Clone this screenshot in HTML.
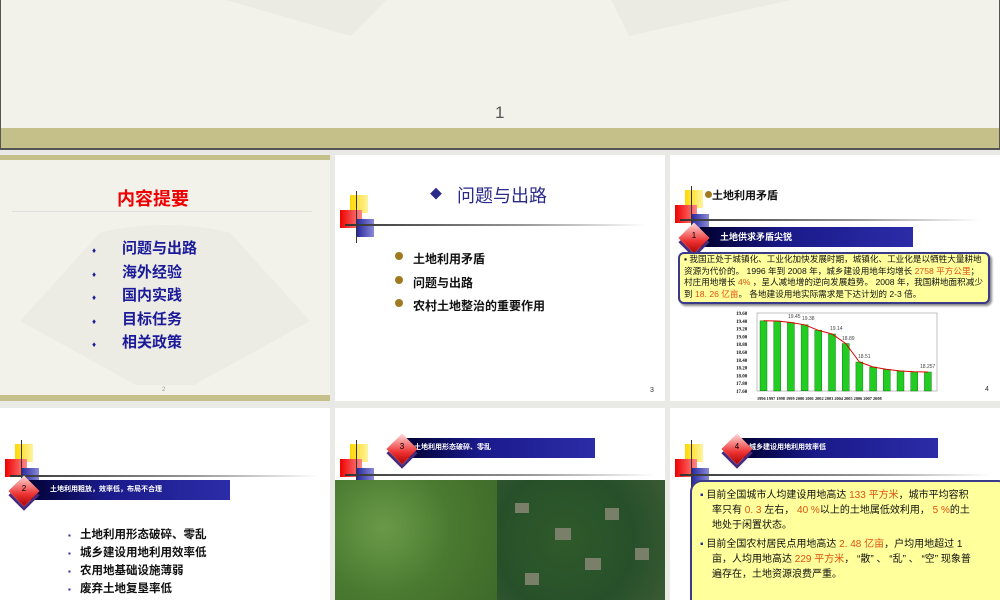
<!DOCTYPE html>
<html><head><meta charset="utf-8"><style>
*{margin:0;padding:0;box-sizing:border-box}
body{width:1000px;height:600px;overflow:hidden;background:#e9e9e6;position:relative;font-family:"Liberation Sans","Noto Sans CJK SC",sans-serif}
.a{position:absolute}
.s{position:absolute;background:#fff;overflow:hidden}
.cn{font-family:"Liberation Sans","Noto Sans CJK SC",sans-serif;font-weight:bold}
.logo{position:absolute;width:40px;height:50px}
.logo .y{position:absolute;left:10px;top:0;width:18px;height:18px;background:linear-gradient(90deg,#ffd800,#fff3a0)}
.logo .r{position:absolute;left:0;top:15px;width:22px;height:18px;background:linear-gradient(90deg,#e00,#f88)}
.logo .b{position:absolute;left:16px;top:24px;width:18px;height:18px;background:linear-gradient(90deg,#24249a,#8a8ad8)}
.logo .v{position:absolute;left:16px;top:-4px;width:1px;height:52px;background:#333}
.hl{position:absolute;height:2px;background:linear-gradient(90deg,#333,#999 60%,#fff)}
.ban{position:absolute;height:20px;background:linear-gradient(90deg,#000030,#1a1a8a 40%,#2c2ca8);color:#fff;font-size:9px;font-weight:bold;line-height:20px;padding-left:20px}
.dia{position:absolute;width:22px;height:22px;transform:rotate(45deg);background:linear-gradient(135deg,#fdd,#e33 60%,#a00);box-shadow:3px 3px 0 #4a2a7a}
.dn{position:absolute;font-size:8px;color:#000;width:20px;text-align:center}
</style></head><body>

<!-- slide 1 -->
<div class="s" style="left:0;top:0;width:1000px;height:150px;background:#f3f2ea;border:1px solid #555;border-top:none">
 <div class="a" style="left:225px;top:0;width:160px;height:36px;background:#ebeae3;clip-path:polygon(0 0,100% 0,78% 100%)"></div>
 <div class="a" style="left:610px;top:0;width:180px;height:36px;background:#ebeae3;clip-path:polygon(0 0,100% 0,10% 100%)"></div>
 <div class="a" style="left:494px;top:103px;font-size:17px;color:#555">1</div>
 <div class="a" style="left:0;top:128px;width:1000px;height:21px;background:#c5bf8a;border-bottom:1px solid #555"></div>
</div>

<!-- slide 2 -->
<div class="s" style="left:0;top:155px;width:330px;height:246px;background:#f2f1ea">
 <div class="a" style="left:0;top:0;width:330px;height:5px;background:#c5bf8a"></div>
 <div class="a" style="left:20px;top:70px;width:290px;height:160px;background:#edece4;border-radius:50% 50% 0 0/45% 45% 0 0;clip-path:polygon(0 60%,30% 0,70% 0,100% 60%,60% 100%,40% 100%)"></div>
 <div class="a" style="left:12px;top:56px;width:300px;height:1px;background:#ddd"></div>
 <div class="a cn" style="left:117px;top:30px;font-size:18px;color:#e00">内容提要</div>
 <div class="a cn" style="left:122px;top:82px;font-size:15px;line-height:23.5px;color:#1a1a9a">问题与出路<br>海外经验<br>国内实践<br>目标任务<br>相关政策</div>
 <div class="a" style="left:92px;top:84px;font-size:8px;line-height:23.5px;color:#1a1a9a">♦<br>♦<br>♦<br>♦<br>♦</div>
 <div class="a" style="left:162px;top:232px;font-size:6px;color:#999">2</div>
 <div class="a" style="left:0;top:240px;width:330px;height:6px;background:#c5bf8a"></div>
</div>

<!-- slide 3 -->
<div class="s" style="left:335px;top:155px;width:330px;height:246px">
 <div class="logo" style="left:5px;top:40px"><div class="y"></div><div class="r"></div><div class="b"></div><div class="v"></div></div>
 <div class="hl" style="left:10px;top:69px;width:300px"></div>
 <div class="a" style="left:95px;top:30px;font-size:12px;color:#2a2a8a">◆</div>
 <div class="a cn" style="left:122px;top:27px;font-size:18px;color:#2a2a8a;font-weight:normal">问题与出路</div>
 <div class="a cn" style="left:78px;top:93px;font-size:12px;line-height:23.5px;color:#111">土地利用矛盾<br>问题与出路<br>农村土地整治的重要作用</div>
 <div class="a" style="left:60px;top:97px;width:8px;height:8px;border-radius:50%;background:#a07a20"></div>
 <div class="a" style="left:60px;top:121px;width:8px;height:8px;border-radius:50%;background:#a07a20"></div>
 <div class="a" style="left:60px;top:144px;width:8px;height:8px;border-radius:50%;background:#a07a20"></div>
 <div class="a" style="left:315px;top:232px;font-size:7px;color:#333">3</div>
</div>

<!-- slide 4 -->
<div class="s" style="left:670px;top:155px;width:330px;height:246px">
 <div class="logo" style="left:5px;top:35px"><div class="y"></div><div class="r"></div><div class="b"></div><div class="v"></div></div>
 <div class="hl" style="left:10px;top:64px;width:300px"></div>
 <div class="a" style="left:35px;top:36px;width:7px;height:7px;border-radius:50%;background:#a07a20"></div>
 <div class="a cn" style="left:42px;top:32px;font-size:11px;color:#111">土地利用矛盾</div>
 <div class="ban" style="left:30px;top:72px;width:213px;padding-left:20px">土地供求矛盾尖锐</div>
 <div class="dia" style="left:13px;top:72px"></div><div class="dn" style="left:14px;top:76px">1</div>
 <div class="a" style="left:8px;top:97px;width:312px;height:52px;background:#ffff9c;border:2px solid #3a3a8a;border-radius:6px;box-shadow:2px 2px 2px #888"></div>
 <div class="a" style="left:14px;top:99px;width:300px;font-size:8.6px;line-height:11.5px;color:#111">▪ 我国正处于城镇化、工业化加快发展时期，城镇化、工业化是以牺牲大量耕地资源为代价的。 1996 年到 2008 年，城乡建设用地年均增长 <span style="color:#e05010">2758 平方公里</span>；村庄用地增长 <span style="color:#e05010">4%</span> ，呈人减地增的逆向发展趋势。 2008 年，我国耕地面积减少到 <span style="color:#e05010">18. 26 亿亩</span>。 各地建设用地实际需求是下达计划的 2-3 倍。</div>
 <svg class="a" style="left:60px;top:155px" width="220" height="92" viewBox="0 0 220 92">
  <g font-size="5" font-family="Liberation Serif" font-weight="bold" fill="#111">
   <text x="6" y="5">19.60</text><text x="6" y="12.8">19.40</text><text x="6" y="20.6">19.20</text><text x="6" y="28.4">19.00</text><text x="6" y="36.2">18.80</text><text x="6" y="44">18.60</text><text x="6" y="51.8">18.40</text><text x="6" y="59.6">18.20</text><text x="6" y="67.4">18.00</text><text x="6" y="75.2">17.80</text><text x="6" y="83">17.60</text>
  </g>
  <rect x="27" y="3" width="180" height="78" fill="#fff" stroke="#999" stroke-width=".6"/>
  <g fill="#22cc22" stroke="#060" stroke-width=".4">
   <rect x="30" y="10.8" width="7" height="70"/><rect x="43.7" y="11" width="7" height="70"/><rect x="57.4" y="12.5" width="7" height="68.5"/><rect x="71.1" y="14.8" width="7" height="66"/><rect x="84.8" y="20.3" width="7" height="60.7"/><rect x="98.5" y="24" width="7" height="57"/><rect x="112.2" y="33.5" width="7" height="47.5"/><rect x="125.9" y="52" width="7" height="29"/><rect x="139.6" y="57" width="7" height="24"/><rect x="153.3" y="59.4" width="7" height="21.6"/><rect x="167" y="61" width="7" height="20"/><rect x="180.7" y="61.7" width="7" height="19.3"/><rect x="194.4" y="62" width="7" height="19"/>
  </g>
  <polyline fill="none" stroke="#d00" stroke-width="1" points="33.5,10.8 47.2,11 60.9,12.5 74.6,14.8 88.3,20.3 102,24 115.7,33.5 129.4,52 143.1,57 156.8,59.4 170.5,61 184.2,61.7 197.9,62"/>
  <g font-size="5" fill="#444"><text x="58" y="8">19.45</text><text x="72" y="10">19.38</text><text x="100" y="20">19.14</text><text x="112" y="30">18.89</text><text x="128" y="48">18.51</text><text x="190" y="58">18.257</text></g>
  <g font-size="4.3" font-family="Liberation Serif" font-weight="bold" fill="#111"><text x="27" y="90">1996 1997 1998 1999 2000 2001 2002 2003 2004 2005 2006 2007 2008</text></g>
 </svg>
 <div class="a" style="left:315px;top:231px;font-size:7px;color:#333">4</div>
</div>

<!-- slide 5 -->
<div class="s" style="left:0;top:408px;width:330px;height:192px">
 <div class="logo" style="left:5px;top:36px"><div class="y"></div><div class="r"></div><div class="b"></div><div class="v"></div></div>
 <div class="hl" style="left:10px;top:67px;width:310px"></div>
 <div class="ban" style="left:22px;top:72px;width:208px;font-size:7px;padding-left:28px">土地利用粗放，效率低，布局不合理</div>
 <div class="dia" style="left:13px;top:72px"></div><div class="dn" style="left:14px;top:76px">2</div>
 <div class="a cn" style="left:80px;top:118px;font-size:11.5px;line-height:18px;color:#111">土地利用形态破碎、零乱<br>城乡建设用地利用效率低<br>农用地基础设施薄弱<br>废弃土地复垦率低</div>
 <div class="a" style="left:68px;top:119px;font-size:8px;line-height:18px;color:#2a2a9a">▪<br>▪<br>▪<br>▪</div>
</div>

<!-- slide 6 -->
<div class="s" style="left:335px;top:408px;width:330px;height:192px">
 <div class="logo" style="left:5px;top:36px"><div class="y"></div><div class="r"></div><div class="b"></div><div class="v"></div></div>
 <div class="hl" style="left:10px;top:66px;width:310px"></div>
 <div class="ban" style="left:65px;top:30px;width:195px;font-size:7px;padding-left:14px">土地利用形态破碎、零乱</div>
 <div class="dia" style="left:56px;top:30px"></div><div class="dn" style="left:57px;top:34px">3</div>
 <div class="a" style="left:0;top:72px;width:162px;height:120px;background:radial-gradient(circle at 30% 40%,#6a9a48,#4a7a30 50%,#3e6a2a)"></div>
 <div class="a" style="left:162px;top:72px;width:168px;height:120px;background:radial-gradient(circle at 40% 50%,#2f5a2a,#27502a 60%,#3a5a34)"></div>
 <div class="a" style="left:180px;top:95px;width:14px;height:10px;background:#7a7f6a"></div>
 <div class="a" style="left:220px;top:120px;width:16px;height:12px;background:#7a7f6a"></div>
 <div class="a" style="left:270px;top:100px;width:14px;height:12px;background:#7a7f6a"></div>
 <div class="a" style="left:250px;top:150px;width:16px;height:12px;background:#7a7f6a"></div>
 <div class="a" style="left:190px;top:165px;width:14px;height:12px;background:#7a7f6a"></div>
 <div class="a" style="left:300px;top:140px;width:14px;height:12px;background:#7a7f6a"></div>
</div>

<!-- slide 7 -->
<div class="s" style="left:670px;top:408px;width:330px;height:192px">
 <div class="logo" style="left:5px;top:36px"><div class="y"></div><div class="r"></div><div class="b"></div><div class="v"></div></div>
 <div class="hl" style="left:10px;top:66px;width:310px"></div>
 <div class="ban" style="left:65px;top:30px;width:203px;font-size:7px;padding-left:14px">城乡建设用地利用效率低</div>
 <div class="dia" style="left:56px;top:30px"></div><div class="dn" style="left:57px;top:34px">4</div>
 <div class="a" style="left:20px;top:72px;width:320px;height:140px;background:#ffff9c;border:2px solid #3a3a8a;border-radius:12px"></div>
 <div class="a" style="left:28px;top:80px;width:278px;font-size:10px;line-height:15px;color:#111;padding-left:14px">
  <div style="text-indent:-12px"><span style="color:#2a2a9a">▪</span> 目前全国城市人均建设用地高达 <span style="color:#e05010">133 平方米</span>，城市平均容积率只有 <span style="color:#e05010">0. 3</span> 左右， <span style="color:#e05010">40 %</span>以上的土地属低效利用， <span style="color:#e05010">5 %</span>的土地处于闲置状态。</div>
  <div style="text-indent:-12px;margin-top:4px"><span style="color:#2a2a9a">▪</span> 目前全国农村居民点用地高达 <span style="color:#e05010">2. 48 亿亩</span>，户均用地超过 1 亩，人均用地高达 <span style="color:#e05010">229 平方米</span>， “散” 、 “乱” 、 “空” 现象普遍存在，土地资源浪费严重。</div>
 </div>
</div>
</body></html>
